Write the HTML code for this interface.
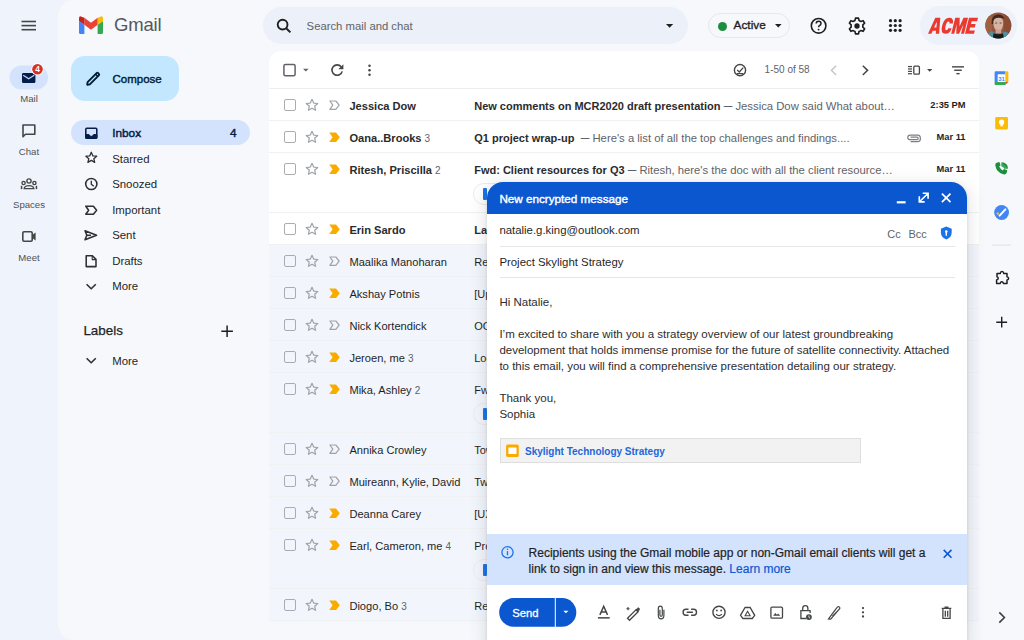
<!DOCTYPE html>
<html><head><meta charset="utf-8">
<style>
*{margin:0;padding:0;box-sizing:border-box}
html,body{width:1024px;height:640px;overflow:hidden}
body{background:#eef3fc;font-family:"Liberation Sans",sans-serif;position:relative;color:#1f1f1f}
.a{position:absolute}
.t{position:absolute;line-height:0;white-space:nowrap}
svg{position:absolute;overflow:visible}
#panel{left:58px;top:0;width:966px;height:640px;background:#f6f8fc;border-radius:16px 0 0 16px}
.rl{font-size:9.6px;color:#4f5257;text-align:center;width:58px;left:0}
.nav{font-size:11.4px;color:#1f1f1f;left:112.2px}
.row{position:absolute;left:0;width:100%;height:32px;border-bottom:1px solid #eff1f3}
.row.rd{background:#f2f6fc}
.row.ur{background:#fff}
.nm{left:80.4px;font-size:11.1px;color:#1f1f1f}
.ur .nm,.ur .sb{font-weight:bold;color:#2a2b2d}
.sb{left:205.2px;font-size:11px;color:#1f1f1f;max-width:440px;overflow:hidden;line-height:14px;margin-top:-7px}
.sn{color:#5f6368;font-weight:normal;font-size:11.3px}
.cnt{font-size:10px;color:#5f6368;font-weight:normal}
.dt{right:13.2px;font-size:9.3px;font-weight:bold;color:#1f1f1f;text-align:right}
.cb{position:absolute;left:14.6px;width:12px;height:12px;border:1.4px solid #a9acb0;border-radius:2px}
.chip{position:absolute;left:204px;width:120px;height:22px;border:1px solid #ebebeb;border-radius:11px;background:transparent}
</style></head><body>

<!-- LEFT RAIL -->
<svg width="58" height="640" style="left:0;top:0">
  <g fill="#444746">
    <rect x="21.5" y="20.7" width="14.5" height="1.6"/>
    <rect x="21.5" y="24.8" width="14.5" height="1.6"/>
    <rect x="21.5" y="28.9" width="14.5" height="1.6"/>
  </g>
  <rect x="9.5" y="65.5" width="38.5" height="24" rx="12" fill="#d3e3fd"/>
  <path d="M22 74.2 Q22 73 23.2 73 H34.2 Q35.4 73 35.4 74.2 V81.8 Q35.4 83 34.2 83 H23.2 Q22 83 22 81.8Z" fill="#041e49"/>
  <path d="M23.2 75.2 L28.7 78.8 L34.2 75.2" stroke="#c7d6f5" stroke-width="1.2" fill="none"/>
  <circle cx="37.5" cy="69.3" r="6.2" fill="#fff"/>
  <circle cx="37.5" cy="69.3" r="5.3" fill="#d93025"/>
  <text x="37.5" y="72.4" font-size="8.4" font-weight="bold" fill="#fff" text-anchor="middle" font-family="Liberation Sans">4</text>
  <!-- chat -->
  <path d="M23 125 H34.8 V134.3 H25.5 L23 136.8Z" stroke="#444746" stroke-width="1.6" fill="none" stroke-linejoin="round"/>
  <!-- spaces -->
  <g stroke="#444746" stroke-width="1.4" fill="none">
    <circle cx="29" cy="181" r="2.1"/>
    <circle cx="23.6" cy="183" r="1.6"/>
    <circle cx="34.4" cy="183" r="1.6"/>
    <path d="M24.2 188.6 Q24.6 185.6 29 185.6 Q33.4 185.6 33.8 188.6Z"/>
  </g>
  <rect x="20.8" y="185.8" width="1.5" height="3.3" fill="#444746"/>
  <rect x="35.7" y="185.8" width="1.5" height="3.3" fill="#444746"/>
  <!-- meet -->
  <rect x="22.8" y="231.8" width="9.4" height="9.4" rx="1.2" stroke="#444746" stroke-width="1.6" fill="none"/>
  <path d="M32.2 235 L35.6 232.6 V240.4 L32.2 238Z" fill="#444746"/>
</svg>
<div class="t rl" style="top:98.8px">Mail</div>
<div class="t rl" style="top:151.7px">Chat</div>
<div class="t rl" style="top:204.6px">Spaces</div>
<div class="t rl" style="top:257.5px">Meet</div>

<div id="panel" class="a"></div>

<!-- LOGO -->
<svg width="24" height="18" style="left:79.3px;top:16.2px" viewBox="0 0 24 18">
  <path d="M1.6 18 H5.4 V8.8 L0 4.9 V16.4 Q0 18 1.6 18Z" fill="#4285f4"/>
  <path d="M18.6 18 H22.4 Q24 18 24 16.4 V4.9 L18.6 8.8Z" fill="#34a853"/>
  <path d="M18.6 1.8 V8.8 L24 4.9 V2.6 Q24 -0.8 21 0.9Z" fill="#fbbc04"/>
  <path d="M5.4 8.8 V1.8 L12 6.7 L18.6 1.8 V8.8 L12 13.7Z" fill="#ea4335"/>
  <path d="M0 2.6 V4.9 L5.4 8.8 V1.8 L3 0.9 Q0 -0.8 0 2.6Z" fill="#c5221f"/>
</svg>
<div class="t" style="left:114px;top:24.8px;font-size:18.5px;color:#54575b;letter-spacing:-0.2px">Gmail</div>

<!-- COMPOSE BTN -->
<div class="a" style="left:70.7px;top:56px;width:108px;height:45px;border-radius:14px;background:#c2e7ff"></div>
<svg width="16" height="16" style="left:85px;top:70.5px">
  <path d="M2.2 13.6 L2.6 11.2 L11.6 2.2 Q12.4 1.4 13.2 2.2 L13.8 2.8 Q14.6 3.6 13.8 4.4 L4.8 13.4 L2.4 13.8Z" stroke="#001d35" stroke-width="1.9" fill="none" stroke-linejoin="round"/>
  <path d="M10.6 3.2 L12.8 5.4" stroke="#001d35" stroke-width="1.5"/>
</svg>
<div class="t" style="left:112.5px;top:78.6px;font-size:11.5px;color:#001d35;-webkit-text-stroke:0.4px #001d35">Compose</div>

<!-- NAV -->
<div class="a" style="left:70.6px;top:120.2px;width:179px;height:25px;border-radius:12.5px;background:#d3e3fd"></div>
<svg width="200" height="380" style="left:0;top:0">
  <g stroke="#2f3033" stroke-width="1.55" fill="none" stroke-linejoin="round">
    <!-- inbox -->
    <rect x="85.8" y="128.3" width="11" height="10" rx="1" stroke="#041e49"/>
    <path d="M85.8 134.6 H89 Q89.6 136.4 91.3 136.4 Q93 136.4 93.6 134.6 H96.8 V138.3 H85.8Z" fill="#041e49" stroke="#041e49" stroke-width="1"/>
    <!-- star -->
    <path d="M91.3 152.3 L92.9 155.9 L96.7 156.2 L93.8 158.7 L94.7 162.4 L91.3 160.4 L87.9 162.4 L88.8 158.7 L85.9 156.2 L89.7 155.9Z" stroke-width="1.3"/>
    <!-- snooze clock -->
    <circle cx="91.3" cy="184" r="5.6"/>
    <path d="M91.3 180.8 V184.3 L93.8 186.3" stroke-width="1.3"/>
    <!-- important -->
    <path d="M85.8 206.2 H93.4 L96.6 210.2 L93.4 214.2 H85.8 L88.6 210.2Z"/>
    <!-- sent -->
    <path d="M85 230.8 L96.6 235.3 L85 239.8 L86.8 235.3Z"/>
    <path d="M86.8 235.3 H91"/>
    <!-- drafts -->
    <path d="M86.2 255.8 H92.4 L96 259.4 V266.6 H86.2Z"/>
    <path d="M92.2 255.8 V259.6 H96" stroke-width="1.1"/>
    <!-- more -->
    <path d="M86.6 284.2 L91.2 288.8 L95.8 284.2" stroke-width="1.6"/>
    <path d="M86.6 358.2 L91.2 362.8 L95.8 358.2" stroke-width="1.6"/>
    <!-- plus -->
    <path d="M227.1 325.4 V337 M221.3 331.2 H232.9" stroke="#1f1f1f" stroke-width="1.5"/>
  </g>
</svg>
<div class="t nav" style="top:133px;color:#041e49;font-size:11.8px;-webkit-text-stroke:0.45px #041e49">Inbox</div>
<div class="t" style="left:230px;top:133px;color:#041e49;font-size:11.8px;-webkit-text-stroke:0.45px #041e49">4</div>
<div class="t nav" style="top:158.5px">Starred</div>
<div class="t nav" style="top:184.1px">Snoozed</div>
<div class="t nav" style="top:209.7px">Important</div>
<div class="t nav" style="top:235.2px">Sent</div>
<div class="t nav" style="top:260.8px">Drafts</div>
<div class="t nav" style="top:286.4px">More</div>
<div class="t" style="left:83.4px;top:330.6px;font-size:13.4px;color:#1f1f1f;-webkit-text-stroke:0.25px #1f1f1f">Labels</div>
<div class="t nav" style="top:360.5px">More</div>

<!-- TOP BAR -->
<div class="a" style="left:263.2px;top:6.8px;width:424.7px;height:37.2px;border-radius:19px;background:#ecf0f8"></div>
<svg width="20" height="20" style="left:275px;top:17px">
  <circle cx="7.6" cy="7.6" r="4.9" stroke="#1f1f1f" stroke-width="1.9" fill="none"/>
  <path d="M11.2 11.2 L15.4 15.4" stroke="#1f1f1f" stroke-width="2"/>
</svg>
<div class="t" style="left:306.6px;top:25.6px;font-size:11.3px;color:#5f6368">Search mail and chat</div>
<svg width="10" height="6" style="left:666px;top:23.6px"><path d="M0 0 H7.2 L3.6 3.8Z" fill="#1f1f1f"/></svg>

<div class="a" style="left:708px;top:12.7px;width:81.5px;height:25.3px;border-radius:13px;border:1.6px solid #e5e7eb"></div>
<div class="a" style="left:718.2px;top:21.5px;width:9px;height:9px;border-radius:50%;background:#1e8e3e"></div>
<div class="t" style="left:733.6px;top:25.4px;font-size:11.8px;color:#1f1f1f;-webkit-text-stroke:0.35px #1f1f1f">Active</div>
<svg width="10" height="6" style="left:775px;top:24px"><path d="M0 0 H6.6 L3.3 3.4Z" fill="#1f1f1f"/></svg>

<svg width="120" height="40" style="left:800px;top:5px">
  <!-- help -->
  <circle cx="18.6" cy="20.8" r="7.3" stroke="#1f1f1f" stroke-width="1.6" fill="none"/>
  <path d="M16.2 18.6 Q16.2 16.2 18.6 16.2 Q21 16.2 21 18.4 Q21 19.8 19.4 20.6 Q18.6 21.1 18.6 22.3" stroke="#1f1f1f" stroke-width="1.5" fill="none"/>
  <circle cx="18.6" cy="24.6" r="0.95" fill="#1f1f1f"/>
  <!-- apps -->
  <g fill="#1f1f1f"><circle cx="90.5" cy="15.7" r="1.6"/><circle cx="95.29999999999995" cy="15.7" r="1.6"/><circle cx="100.10000000000002" cy="15.7" r="1.6"/><circle cx="90.5" cy="20.5" r="1.6"/><circle cx="95.29999999999995" cy="20.5" r="1.6"/><circle cx="100.10000000000002" cy="20.5" r="1.6"/><circle cx="90.5" cy="25.3" r="1.6"/><circle cx="95.29999999999995" cy="25.3" r="1.6"/><circle cx="100.10000000000002" cy="25.3" r="1.6"/></g>
</svg>
<!-- settings gear -->
<svg width="20" height="20" viewBox="0 0 24 24" style="left:846.6px;top:15.8px">
  <path fill="none" stroke="#1f1f1f" stroke-width="2" stroke-linejoin="round" d="M10.2 2.5 H13.8 L14.4 5.3 Q15.6 5.8 16.6 6.5 L19.3 5.6 L21.1 8.7 L19 10.6 Q19.2 12 19 13.4 L21.1 15.3 L19.3 18.4 L16.6 17.5 Q15.6 18.2 14.4 18.7 L13.8 21.5 H10.2 L9.6 18.7 Q8.4 18.2 7.4 17.5 L4.7 18.4 L2.9 15.3 L5 13.4 Q4.8 12 5 10.6 L2.9 8.7 L4.7 5.6 L7.4 6.5 Q8.4 5.8 9.6 5.3Z"/>
  <circle cx="12" cy="12" r="3.2" fill="#1f1f1f"/>
</svg>

<div class="a" style="left:920px;top:5.7px;width:97px;height:39px;border-radius:20px;background:#edf1f9"></div>
<svg width="1024" height="50" style="left:0;top:0">
  <g transform="translate(932,17.8) skewX(-14) scale(0.83,1)" fill="#ea3a30" fill-rule="evenodd">
    <path d="M0 16 L4 0 H10 L13.4 16 H9.4 L8.8 13 H4.8 L4.1 16Z M5.5 9.8 H8.2 L7.3 4.6 H6.6Z"/>
    <path d="M14.6 8 Q14.6 0 21 0 Q26.4 0 26.8 5.6 H22.8 Q22.6 3.6 21.1 3.6 Q18.8 3.6 18.8 8 Q18.8 12.4 21.1 12.4 Q22.6 12.4 22.8 10.4 H26.8 Q26.4 16 21 16 Q14.6 16 14.6 8Z"/>
    <path d="M28 16 V0 H33.4 L35.7 8.6 L38 0 H43.4 V16 H39.8 V6.4 L37.4 16 H34 L31.6 6.4 V16Z"/>
    <path d="M44.6 0 H55.4 V3.4 H48.8 V6.3 H54.4 V9.6 H48.8 V12.6 H55.4 V16 H44.6Z"/>
  </g>
  <defs><clipPath id="av"><circle cx="998.3" cy="25.5" r="13"/></clipPath></defs>
  <g clip-path="url(#av)">
    <rect x="985" y="12" width="27" height="27" fill="#94563c"/>
    <rect x="985" y="12" width="7" height="27" fill="#a0603f"/>
    <rect x="1004" y="12" width="8" height="27" fill="#8a4c35"/>
    <path d="M991.6 24 Q991 15.6 997.6 14.6 Q1003.4 14.4 1004.6 19.6 Q1004 17.4 999.4 17.8 Q994.4 18.4 993.4 24Z" fill="#3e271d"/>
    <path d="M993.4 21.6 Q993.8 17.8 998.4 17.8 Q1003 17.8 1003.2 22 Q1003.4 27.8 1000.6 30.4 Q998.6 31.6 996.4 30.6 Q993.2 28.4 993.4 21.6Z" fill="#d7b3a3"/>
    <rect x="995.2" y="22.6" width="2" height="0.9" fill="#5a3e36"/>
    <rect x="999.6" y="22.6" width="2" height="0.9" fill="#5a3e36"/>
    <rect x="995.6" y="29.4" width="5.6" height="4.4" fill="#caa294"/>
    <path d="M986 39 Q987 32.6 992 31.2 L995 33 H1002 L1005 31.4 Q1010 32.6 1011 39Z" fill="#4f8fa0"/>
    <path d="M992.6 39 L993.6 33.2 Q998.4 35.2 1003 33.2 L1004 39Z" fill="#1a1a1a"/>
  </g>
</svg>
<div class="a" style="left:269px;top:51.25px;width:709.7px;height:574px;background:linear-gradient(#fff 0,#fff 560px,#f4f7fc 560px);border-radius:12px 12px 2px 2px;overflow:hidden">
<div class="a" style="left:0;top:37.2px;width:100%;height:1px;background:#eceef1"></div>
<div class="row ur" style="top:37.75px;height:32px">
<div class="cb" style="top:10.0px"></div>
<svg width="14" height="14" style="left:36px;top:8.5px"><path d="M7 1.3 L8.7 5.1 L12.8 5.5 L9.7 8.2 L10.6 12.3 L7 10.2 L3.4 12.3 L4.3 8.2 L1.2 5.5 L5.3 5.1Z" fill="none" stroke="#a0a3a7" stroke-width="1.2" stroke-linejoin="round"/></svg>
<svg width="12" height="11" style="left:59.5px;top:10.7px"><path d="M0.9 1 H6.8 L10.2 5.2 L6.8 9.4 H0.9 L3.8 5.2Z" fill="none" stroke="#a0a3a7" stroke-width="1.2" stroke-linejoin="round"/></svg>
<div class="t nm" style="top:16.6px">Jessica Dow</div>
<div class="t sb" style="top:16.6px">New comments on MCR2020 draft presentation<span class="sn"> <span style='font-size:8.6px;vertical-align:1.2px;font-weight:bold'>—</span> Jessica Dow said What about…</span></div>
<div class="t dt" style="top:16.4px">2:35 PM</div>
</div>
<div class="row ur" style="top:69.75px;height:32px">
<div class="cb" style="top:10.0px"></div>
<svg width="14" height="14" style="left:36px;top:8.5px"><path d="M7 1.3 L8.7 5.1 L12.8 5.5 L9.7 8.2 L10.6 12.3 L7 10.2 L3.4 12.3 L4.3 8.2 L1.2 5.5 L5.3 5.1Z" fill="none" stroke="#a0a3a7" stroke-width="1.2" stroke-linejoin="round"/></svg>
<svg width="12" height="11" style="left:59.5px;top:10.7px"><path d="M0.2 0.4 H7 L10.8 5.2 L7 10 H0.2 L3.6 5.2Z" fill="#f9ab00"/></svg>
<div class="t nm" style="top:16.6px">Oana..Brooks <span class="cnt">3</span></div>
<div class="t sb" style="top:16.6px">Q1 project wrap-up<span class="sn">&nbsp; <span style='font-size:8.6px;vertical-align:1.2px;font-weight:bold'>—</span> Here's a list of all the top challenges and findings....</span></div>
<svg width="16" height="10" style="left:636.5px;top:11.5px"><path d="M4.6 8.6 H11.8 Q14.4 8.6 14.4 5.4 Q14.4 2.2 11.8 2.2 H4 Q1.8 2.2 1.8 4.4 Q1.8 6.6 4 6.6 H11 Q12.2 6.6 12.2 5.4 Q12.2 4.2 11 4.2 H4.6" fill="none" stroke="#7c7f84" stroke-width="1.2"/></svg>
<div class="t dt" style="top:16.4px">Mar 11</div>
</div>
<div class="row ur" style="top:101.75px;height:60px">
<div class="cb" style="top:10.0px"></div>
<svg width="14" height="14" style="left:36px;top:8.5px"><path d="M7 1.3 L8.7 5.1 L12.8 5.5 L9.7 8.2 L10.6 12.3 L7 10.2 L3.4 12.3 L4.3 8.2 L1.2 5.5 L5.3 5.1Z" fill="none" stroke="#a0a3a7" stroke-width="1.2" stroke-linejoin="round"/></svg>
<svg width="12" height="11" style="left:59.5px;top:10.7px"><path d="M0.2 0.4 H7 L10.8 5.2 L7 10 H0.2 L3.6 5.2Z" fill="#f9ab00"/></svg>
<div class="t nm" style="top:16.6px">Ritesh, Priscilla <span class="cnt">2</span></div>
<div class="t sb" style="top:16.6px">Fwd: Client resources for Q3<span class="sn"> <span style='font-size:8.6px;vertical-align:1.2px;font-weight:bold'>—</span> Ritesh, here's the doc with all the client resource…</span></div>
<div class="t dt" style="top:16.4px">Mar 11</div>
<div class="chip" style="top:30px"><div class="a" style="left:9.3px;top:4px;width:3.4px;height:12.2px;background:#1a73e8;border-radius:1px"></div></div>
</div>
<div class="row ur" style="top:161.75px;height:32px">
<div class="cb" style="top:10.0px"></div>
<svg width="14" height="14" style="left:36px;top:8.5px"><path d="M7 1.3 L8.7 5.1 L12.8 5.5 L9.7 8.2 L10.6 12.3 L7 10.2 L3.4 12.3 L4.3 8.2 L1.2 5.5 L5.3 5.1Z" fill="none" stroke="#a0a3a7" stroke-width="1.2" stroke-linejoin="round"/></svg>
<svg width="12" height="11" style="left:59.5px;top:10.7px"><path d="M0.2 0.4 H7 L10.8 5.2 L7 10 H0.2 L3.6 5.2Z" fill="#f9ab00"/></svg>
<div class="t nm" style="top:16.6px">Erin Sardo</div>
<div class="t sb" style="top:16.6px">Last year's EMEA strategy deck<span class="sn"> <span style='font-size:8.6px;vertical-align:1.2px;font-weight:bold'>—</span> Sending this out to anyone who missed it</span></div>
<div class="t dt" style="top:16.4px">Mar 11</div>
</div>
<div class="row rd" style="top:193.75px;height:32px">
<div class="cb" style="top:10.0px"></div>
<svg width="14" height="14" style="left:36px;top:8.5px"><path d="M7 1.3 L8.7 5.1 L12.8 5.5 L9.7 8.2 L10.6 12.3 L7 10.2 L3.4 12.3 L4.3 8.2 L1.2 5.5 L5.3 5.1Z" fill="none" stroke="#a0a3a7" stroke-width="1.2" stroke-linejoin="round"/></svg>
<svg width="12" height="11" style="left:59.5px;top:10.7px"><path d="M0.9 1 H6.8 L10.2 5.2 L6.8 9.4 H0.9 L3.8 5.2Z" fill="none" stroke="#a0a3a7" stroke-width="1.2" stroke-linejoin="round"/></svg>
<div class="t nm" style="top:16.6px">Maalika Manoharan</div>
<div class="t sb" style="top:16.6px">Re: Project Skylight 1-pager<span class="sn"> <span style='font-size:8.6px;vertical-align:1.2px;font-weight:bold'>—</span> Overall, it looks great! I have a few suggestions</span></div>
<div class="t dt" style="top:16.4px">Mar 10</div>
</div>
<div class="row rd" style="top:225.75px;height:32px">
<div class="cb" style="top:10.0px"></div>
<svg width="14" height="14" style="left:36px;top:8.5px"><path d="M7 1.3 L8.7 5.1 L12.8 5.5 L9.7 8.2 L10.6 12.3 L7 10.2 L3.4 12.3 L4.3 8.2 L1.2 5.5 L5.3 5.1Z" fill="none" stroke="#a0a3a7" stroke-width="1.2" stroke-linejoin="round"/></svg>
<svg width="12" height="11" style="left:59.5px;top:10.7px"><path d="M0.2 0.4 H7 L10.8 5.2 L7 10 H0.2 L3.6 5.2Z" fill="#f9ab00"/></svg>
<div class="t nm" style="top:16.6px">Akshay Potnis</div>
<div class="t sb" style="top:16.6px">[Updated invitation] Midwest retail sales check-in<span class="sn"> <span style='font-size:8.6px;vertical-align:1.2px;font-weight:bold'>—</span> Midwest retail sales check-in</span></div>
<div class="t dt" style="top:16.4px">Mar 10</div>
</div>
<div class="row rd" style="top:257.75px;height:32px">
<div class="cb" style="top:10.0px"></div>
<svg width="14" height="14" style="left:36px;top:8.5px"><path d="M7 1.3 L8.7 5.1 L12.8 5.5 L9.7 8.2 L10.6 12.3 L7 10.2 L3.4 12.3 L4.3 8.2 L1.2 5.5 L5.3 5.1Z" fill="none" stroke="#a0a3a7" stroke-width="1.2" stroke-linejoin="round"/></svg>
<svg width="12" height="11" style="left:59.5px;top:10.7px"><path d="M0.9 1 H6.8 L10.2 5.2 L6.8 9.4 H0.9 L3.8 5.2Z" fill="none" stroke="#a0a3a7" stroke-width="1.2" stroke-linejoin="round"/></svg>
<div class="t nm" style="top:16.6px">Nick Kortendick</div>
<div class="t sb" style="top:16.6px">OOO next week<span class="sn"> <span style='font-size:8.6px;vertical-align:1.2px;font-weight:bold'>—</span> Hey, just wanted to give you a heads-up</span></div>
<div class="t dt" style="top:16.4px">Mar 10</div>
</div>
<div class="row rd" style="top:289.75px;height:32px">
<div class="cb" style="top:10.0px"></div>
<svg width="14" height="14" style="left:36px;top:8.5px"><path d="M7 1.3 L8.7 5.1 L12.8 5.5 L9.7 8.2 L10.6 12.3 L7 10.2 L3.4 12.3 L4.3 8.2 L1.2 5.5 L5.3 5.1Z" fill="none" stroke="#a0a3a7" stroke-width="1.2" stroke-linejoin="round"/></svg>
<svg width="12" height="11" style="left:59.5px;top:10.7px"><path d="M0.2 0.4 H7 L10.8 5.2 L7 10 H0.2 L3.6 5.2Z" fill="#f9ab00"/></svg>
<div class="t nm" style="top:16.6px">Jeroen, me <span class="cnt">3</span></div>
<div class="t sb" style="top:16.6px">Logo redesign ideas<span class="sn"> <span style='font-size:8.6px;vertical-align:1.2px;font-weight:bold'>—</span> Excellent. Do have you have time to meet</span></div>
<div class="t dt" style="top:16.4px">Mar 9</div>
</div>
<div class="row rd" style="top:321.75px;height:60px">
<div class="cb" style="top:10.0px"></div>
<svg width="14" height="14" style="left:36px;top:8.5px"><path d="M7 1.3 L8.7 5.1 L12.8 5.5 L9.7 8.2 L10.6 12.3 L7 10.2 L3.4 12.3 L4.3 8.2 L1.2 5.5 L5.3 5.1Z" fill="none" stroke="#a0a3a7" stroke-width="1.2" stroke-linejoin="round"/></svg>
<svg width="12" height="11" style="left:59.5px;top:10.7px"><path d="M0.2 0.4 H7 L10.8 5.2 L7 10 H0.2 L3.6 5.2Z" fill="#f9ab00"/></svg>
<div class="t nm" style="top:16.6px">Mika, Ashley <span class="cnt">2</span></div>
<div class="t sb" style="top:16.6px">Fwd: Feedback on client's website<span class="sn"> <span style='font-size:8.6px;vertical-align:1.2px;font-weight:bold'>—</span> Here are a few ideas</span></div>
<div class="t dt" style="top:16.4px">Mar 9</div>
<div class="chip" style="top:30px"><div class="a" style="left:9.3px;top:4px;width:3.4px;height:12.2px;background:#1a73e8;border-radius:1px"></div></div>
</div>
<div class="row rd" style="top:381.75px;height:32px">
<div class="cb" style="top:10.0px"></div>
<svg width="14" height="14" style="left:36px;top:8.5px"><path d="M7 1.3 L8.7 5.1 L12.8 5.5 L9.7 8.2 L10.6 12.3 L7 10.2 L3.4 12.3 L4.3 8.2 L1.2 5.5 L5.3 5.1Z" fill="none" stroke="#a0a3a7" stroke-width="1.2" stroke-linejoin="round"/></svg>
<svg width="12" height="11" style="left:59.5px;top:10.7px"><path d="M0.9 1 H6.8 L10.2 5.2 L6.8 9.4 H0.9 L3.8 5.2Z" fill="none" stroke="#a0a3a7" stroke-width="1.2" stroke-linejoin="round"/></svg>
<div class="t nm" style="top:16.6px">Annika Crowley</div>
<div class="t sb" style="top:16.6px">Town hall on the upcoming merger<span class="sn"> <span style='font-size:8.6px;vertical-align:1.2px;font-weight:bold'>—</span> Everyone, we'll be hosting our second town hall</span></div>
<div class="t dt" style="top:16.4px">Mar 9</div>
</div>
<div class="row rd" style="top:413.75px;height:32px">
<div class="cb" style="top:10.0px"></div>
<svg width="14" height="14" style="left:36px;top:8.5px"><path d="M7 1.3 L8.7 5.1 L12.8 5.5 L9.7 8.2 L10.6 12.3 L7 10.2 L3.4 12.3 L4.3 8.2 L1.2 5.5 L5.3 5.1Z" fill="none" stroke="#a0a3a7" stroke-width="1.2" stroke-linejoin="round"/></svg>
<svg width="12" height="11" style="left:59.5px;top:10.7px"><path d="M0.9 1 H6.8 L10.2 5.2 L6.8 9.4 H0.9 L3.8 5.2Z" fill="none" stroke="#a0a3a7" stroke-width="1.2" stroke-linejoin="round"/></svg>
<div class="t nm" style="top:16.6px">Muireann, Kylie, David</div>
<div class="t sb" style="top:16.6px">Two pics from the conference<span class="sn"> <span style='font-size:8.6px;vertical-align:1.2px;font-weight:bold'>—</span> Look at the size of this crowd!</span></div>
<div class="t dt" style="top:16.4px">Mar 8</div>
</div>
<div class="row rd" style="top:445.75px;height:32px">
<div class="cb" style="top:10.0px"></div>
<svg width="14" height="14" style="left:36px;top:8.5px"><path d="M7 1.3 L8.7 5.1 L12.8 5.5 L9.7 8.2 L10.6 12.3 L7 10.2 L3.4 12.3 L4.3 8.2 L1.2 5.5 L5.3 5.1Z" fill="none" stroke="#a0a3a7" stroke-width="1.2" stroke-linejoin="round"/></svg>
<svg width="12" height="11" style="left:59.5px;top:10.7px"><path d="M0.2 0.4 H7 L10.8 5.2 L7 10 H0.2 L3.6 5.2Z" fill="#f9ab00"/></svg>
<div class="t nm" style="top:16.6px">Deanna Carey</div>
<div class="t sb" style="top:16.6px">[UX] Special delivery! This week's top picks<span class="sn"> <span style='font-size:8.6px;vertical-align:1.2px;font-weight:bold'>—</span> This week's edition</span></div>
<div class="t dt" style="top:16.4px">Mar 8</div>
</div>
<div class="row rd" style="top:477.75px;height:60px">
<div class="cb" style="top:10.0px"></div>
<svg width="14" height="14" style="left:36px;top:8.5px"><path d="M7 1.3 L8.7 5.1 L12.8 5.5 L9.7 8.2 L10.6 12.3 L7 10.2 L3.4 12.3 L4.3 8.2 L1.2 5.5 L5.3 5.1Z" fill="none" stroke="#a0a3a7" stroke-width="1.2" stroke-linejoin="round"/></svg>
<svg width="12" height="11" style="left:59.5px;top:10.7px"><path d="M0.2 0.4 H7 L10.8 5.2 L7 10 H0.2 L3.6 5.2Z" fill="#f9ab00"/></svg>
<div class="t nm" style="top:16.6px">Earl, Cameron, me <span class="cnt">4</span></div>
<div class="t sb" style="top:16.6px">Product Strategy classes<span class="sn"> <span style='font-size:8.6px;vertical-align:1.2px;font-weight:bold'>—</span> He's right here</span></div>
<div class="t dt" style="top:16.4px">Mar 8</div>
<div class="chip" style="top:30px"><div class="a" style="left:9.3px;top:4px;width:3.4px;height:12.2px;background:#1a73e8;border-radius:1px"></div></div>
</div>
<div class="row rd" style="top:537.75px;height:32px">
<div class="cb" style="top:10.0px"></div>
<svg width="14" height="14" style="left:36px;top:8.5px"><path d="M7 1.3 L8.7 5.1 L12.8 5.5 L9.7 8.2 L10.6 12.3 L7 10.2 L3.4 12.3 L4.3 8.2 L1.2 5.5 L5.3 5.1Z" fill="none" stroke="#a0a3a7" stroke-width="1.2" stroke-linejoin="round"/></svg>
<svg width="12" height="11" style="left:59.5px;top:10.7px"><path d="M0.2 0.4 H7 L10.8 5.2 L7 10 H0.2 L3.6 5.2Z" fill="#f9ab00"/></svg>
<div class="t nm" style="top:16.6px">Diogo, Bo <span class="cnt">3</span></div>
<div class="t sb" style="top:16.6px">Re: Design preview<span class="sn"> <span style='font-size:8.6px;vertical-align:1.2px;font-weight:bold'>—</span> Looks good</span></div>
<div class="t dt" style="top:16.4px">Mar 7</div>
</div>
</div>
<!-- LIST TOOLBAR -->
<svg width="720" height="40" style="left:269px;top:51.25px">
  <g transform="translate(-269,-51.25)">
    <rect x="283.9" y="64.8" width="11.2" height="11.2" rx="1.5" fill="none" stroke="#5f6368" stroke-width="1.5"/>
    <path d="M303 69 H308.6 L305.8 71.8Z" fill="#5f6368"/>
    <!-- refresh -->
    <path d="M342.2 71.6 A5.2 5.2 0 1 1 341.2 67" fill="none" stroke="#444746" stroke-width="1.6"/>
    <path d="M343.4 64.4 V69.4 H338.4Z" fill="#444746"/>
    <g fill="#444746"><circle cx="369.5" cy="66" r="1.25"/><circle cx="369.5" cy="70.5" r="1.25"/><circle cx="369.5" cy="75" r="1.25"/></g>
    <!-- check circle -->
    <circle cx="740" cy="70.4" r="5.6" fill="none" stroke="#444746" stroke-width="1.4"/>
    <path d="M737.2 70.2 L739.4 72.2 L743.2 67.8" fill="none" stroke="#444746" stroke-width="1.3"/>
    <path d="M737 73.8 H743" stroke="#444746" stroke-width="1.1"/>
    <!-- chevrons -->
    <path d="M836.2 66 L831.4 70.6 L836.2 75.2" fill="none" stroke="#c4c7cc" stroke-width="1.5"/>
    <path d="M862.8 66 L867.6 70.6 L862.8 75.2" fill="none" stroke="#444746" stroke-width="1.5"/>
    <!-- split pane -->
    <g fill="#444746">
      <rect x="908" y="66.2" width="4" height="1.2"/><rect x="908" y="68.6" width="4" height="1.2"/>
      <rect x="908" y="71" width="4" height="1.2"/><rect x="908" y="73.4" width="4" height="1.2"/>
    </g>
    <rect x="913.8" y="66.4" width="5.6" height="8" rx="1" fill="none" stroke="#444746" stroke-width="1.3"/>
    <path d="M927 69.2 H932.4 L929.7 71.9Z" fill="#444746"/>
    <!-- filter -->
    <g fill="#444746">
      <rect x="952" y="66.4" width="12" height="1.4"/>
      <rect x="954.2" y="69.8" width="7.6" height="1.4"/>
      <rect x="956.4" y="73.2" width="3.2" height="1.4"/>
    </g>
  </g>
</svg>
<div class="t" style="left:764.6px;top:70.4px;font-size:10px;color:#5f6368">1-50 of 58</div>

<!-- COMPOSE -->
<div class="a" style="left:486.5px;top:182.3px;width:480.2px;height:470px;background:#fff;border-radius:16px 16px 0 0;box-shadow:0 4px 16px 3px rgba(60,64,67,0.13),0 1px 3px rgba(60,64,67,0.18);overflow:hidden">
  <div class="a" style="left:0;top:0;width:100%;height:31.7px;background:#0b57d0"></div>
  <div class="a" style="left:13px;top:63.7px;width:455.5px;height:1px;background:#e6e6e6"></div>
  <div class="a" style="left:13px;top:95.2px;width:455.5px;height:1px;background:#e6e6e6"></div>
  <div class="a" style="left:13px;top:256px;width:361.5px;height:25px;background:#f2f2f2;border:1px solid #dedede"></div>
  <div class="a" style="left:0;top:352px;width:100%;height:50.5px;background:#d3e3fd"></div>
</div>
<div class="t" style="left:499.4px;top:198.6px;font-size:11.7px;color:#fff;-webkit-text-stroke:0.4px #fff">New encrypted message</div>
<svg width="480" height="458" style="left:486.5px;top:182.3px">
  <g transform="translate(-486.5,-182.3)">
    <rect x="896.3" y="201.5" width="8.8" height="2.2" fill="#fff"/>
    <path d="M919 202 L927.4 193.8 M922.2 193.6 H927.6 V199 M918.8 196.6 V202.2 H924.2" fill="none" stroke="#fff" stroke-width="1.6"/>
    <path d="M941.4 193.9 L950 202.5 M950 193.9 L941.4 202.5" stroke="#fff" stroke-width="1.7"/>
    <!-- shield -->
    <path d="M945.8 226.9 L951.2 229.1 V232.6 Q951.2 237.8 945.8 239.8 Q940.4 237.8 940.4 232.6 V229.1Z" fill="#1a73e8"/>
    <circle cx="945.8" cy="231.9" r="1.3" fill="#fff"/>
    <rect x="945.1" y="232.4" width="1.4" height="3.6" fill="#fff"/>
    <!-- slides icon -->
    <rect x="505.6" y="444.7" width="12.7" height="12.7" rx="1.6" fill="#f9ab00"/>
    <rect x="507.9" y="447.9" width="8.1" height="6.3" fill="#fff" rx="0.5"/>
    <!-- info icon -->
    <circle cx="507" cy="552.6" r="5.6" fill="none" stroke="#1a73e8" stroke-width="1.3"/>
    <rect x="506.35" y="551.4" width="1.3" height="4.2" fill="#1a73e8"/>
    <circle cx="507" cy="549.6" r="0.8" fill="#1a73e8"/>
    <path d="M943.2 550.2 L951 558 M951 550.2 L943.2 558" stroke="#0b57d0" stroke-width="1.6"/>
    <!-- send button -->
    <path d="M513 598.4 H554.3 V627 H513 A14.3 14.3 0 0 1 513 598.4Z" fill="#0b57d0"/>
    <path d="M555.3 598.4 H561.5 A14.3 14.3 0 0 1 561.5 627 H555.3Z" fill="#0b57d0"/>
    <path d="M562.8 611 H568 L565.4 613.6Z" fill="#fff"/>
    <!-- toolbar icons -->
    <g fill="none" stroke="#444746" stroke-width="1.4">
      <!-- format A -->
      <path d="M599.4 615.2 L603.2 606.6 L607 615.2 M600.8 612.2 H605.6" stroke-width="1.5"/>
      <rect x="597.4" y="617.4" width="11.8" height="1.5" fill="#444746" stroke="none"/>
      <!-- magic pen -->
      <path d="M627 618.6 L635.4 610.2 L637.4 612.2 L629 620.6Z" stroke-width="1.3"/><path d="M635.4 610.2 L637 608.6 Q637.8 607.8 638.6 608.6 Q639.4 609.4 638.6 610.2 L637.4 612.2Z" fill="#444746" stroke-width="1"/>
      <path d="M627.5 607.4 V610.6 M625.9 609 H629.1" stroke-width="1.1"/>
      <!-- attach -->
      <path d="M663.4 610 V615.6 Q663.4 619.2 660.6 619.2 Q657.8 619.2 657.8 615.6 V608.8 Q657.8 606.4 659.8 606.4 Q661.8 606.4 661.8 608.8 V615.4 Q661.8 616.6 660.6 616.6 Q659.4 616.6 659.4 615.4 V610" stroke-width="1.2"/>
      <!-- link -->
      <path d="M688 609.6 H685.4 Q682.6 609.6 682.6 612.6 Q682.6 615.6 685.4 615.6 H688 M690.6 609.6 H693.2 Q696 609.6 696 612.6 Q696 615.6 693.2 615.6 H690.6 M686.2 612.6 H692.4" stroke-width="1.4"/>
      <!-- emoji -->
      <circle cx="718.5" cy="612.6" r="6.1"/>
      <path d="M715.6 614.4 Q718.5 617.6 721.4 614.4" stroke-width="1.2"/><circle cx="716.4" cy="610.8" r="0.9" fill="#444746" stroke="none"/><circle cx="720.6" cy="610.8" r="0.9" fill="#444746" stroke="none"/>
      <!-- drive -->
      <path d="M744.6 607.8 H749.6 L754.2 615.6 L751.8 618.8 H742.4 L740 615.6Z" stroke-width="1.3"/>
      <path d="M747.1 611.6 L744.6 616 H749.6Z" stroke-width="1.1"/>
      <!-- photo -->
      <rect x="770.4" y="607.4" width="11.6" height="11" rx="1.2" stroke-width="1.3"/>
      <path d="M772.6 616 L774.8 613.4 L776.4 615 L777.6 613.8 L779.8 616Z" fill="#444746" stroke="none"/>
      <!-- lock clock -->
      <path d="M802.2 611 V608.8 Q802.2 606 804.8 606 Q807.4 606 807.4 608.8 V611" stroke-width="1.3"/>
      <path d="M806 618.8 H800.4 V611 H809.6 V613.4" stroke-width="1.3"/>
      <circle cx="808.4" cy="617.4" r="2.9" fill="#444746" stroke="none"/><path d="M808.4 615.8 V617.6 L809.6 618.4" stroke="#fff" stroke-width="0.8"/>
      <!-- signature -->
      <path d="M828 619.2 L836.8 607.4 Q837.8 606.4 838.8 607.2 Q839.8 608 839 609.2 L830.2 619.4Z M831.8 616.6 L839.6 608.6" stroke-width="1.2"/>
      <!-- trash -->
      <path d="M942.4 609.4 V618.6 H949.6 V609.4 M941.2 608.6 H950.8 M944 607.4 H948 M944.8 611 V617 M947.2 611 V617" stroke-width="1.3"/>
    </g>
    <g fill="#444746"><circle cx="862.5" cy="608.4" r="1.15"/><circle cx="862.5" cy="612.6" r="1.15"/><circle cx="862.5" cy="616.8" r="1.15"/></g>
  </g>
</svg>
<div class="t" style="left:499.4px;top:230.4px;font-size:11.4px;color:#1f1f1f">natalie.g.king@outlook.com</div>
<div class="t" style="left:887.2px;top:233.7px;font-size:11px;color:#5f6368">Cc</div>
<div class="t" style="left:908.4px;top:233.7px;font-size:11px;color:#5f6368">Bcc</div>
<div class="t" style="left:499.4px;top:262.3px;font-size:11.4px;color:#1f1f1f">Project Skylight Strategy</div>
<div class="a" style="left:499.4px;top:294px;font-size:11.5px;line-height:16px;color:#2c2d30;white-space:nowrap">Hi Natalie,<br><br>I’m excited to share with you a strategy overview of our latest groundbreaking<br>development that holds immense promise for the future of satellite connectivity. Attached<br>to this email, you will find a comprehensive presentation detailing our strategy.<br><br>Thank you,<br>Sophia</div>
<div class="t" style="left:525px;top:451.7px;font-size:10px;font-weight:bold;color:#1f66d8">Skylight Technology Strategy</div>
<div class="a" style="left:528.6px;top:544.6px;font-size:12px;line-height:16.2px;color:#1f1f1f;white-space:nowrap;-webkit-text-stroke:0.2px #1f1f1f">Recipients using the Gmail mobile app or non-Gmail email clients will get a<br>link to sign in and view this message. <span style="color:#0b57d0;-webkit-text-stroke:0.2px #0b57d0">Learn more</span></div>
<div class="t" style="left:512.2px;top:612.7px;font-size:11.3px;color:#fff;-webkit-text-stroke:0.3px #fff">Send</div>

<!-- RIGHT SIDEBAR -->
<svg width="44" height="640" style="left:980px;top:0">
  <g transform="translate(-980,0)">
    <!-- calendar -->
    <rect x="994.6" y="71.3" width="13.8" height="13.8" rx="1.2" fill="#fff"/>
    <path d="M994.6 72.5 Q994.6 71.3 995.8 71.3 H1005.2 V74.5 H997.8 V82 H994.6Z" fill="#4285f4"/>
    <path d="M1005.2 71.3 H1007.2 Q1008.4 71.3 1008.4 72.5 V82 H1005.2Z" fill="#fbbc04"/>
    <path d="M994.6 82 H1005.2 V85.1 H995.8 Q994.6 85.1 994.6 83.9Z" fill="#34a853"/>
    <path d="M1005.2 82 H1008.4 L1005.2 85.1Z" fill="#ea4335"/>
    <path d="M997.8 74.5 H1005.2 V82 H997.8Z" fill="#fff"/>
    <text x="1001.5" y="80.9" font-size="6" font-family="Liberation Sans" font-weight="bold" fill="#4285f4" text-anchor="middle">31</text>
    <!-- keep -->
    <rect x="995.2" y="116.9" width="12.8" height="12.5" rx="1.4" fill="#fbbc04"/>
    <circle cx="1001.6" cy="122.2" r="2.6" fill="#fff"/>
    <rect x="1000.4" y="124.4" width="2.4" height="1.9" fill="#fff"/>
    <!-- voice -->
    <path d="M997.4 162.4 L999.4 162 L1000.6 165.2 L999.2 166.6 Q1000.2 169 1002.6 170.4 L1004 169 L1007.2 170.2 L1006.8 172.6 Q1006.4 174.6 1004 174.4 Q996.6 173.2 995.2 165 Q995.2 162.8 997.4 162.4Z" fill="#1e8e3e"/>
    <path d="M1001.6 162.2 Q1007.6 162.4 1008 168.4 H1004.2 Q1004 166.4 1001.6 166.2Z" fill="#1e8e3e"/>
    <path d="M1001.6 162.2 L1008 168.4 H1004.2 Q1004 166.4 1001.6 166.2Z" fill="#34a853"/>
    <!-- tasks -->
    <circle cx="1001.6" cy="212.5" r="7.4" fill="#4285f4"/>
    <path d="M999.6 215.6 L1005.4 209.4" stroke="#fff" stroke-width="2" stroke-linecap="round"/>
    <circle cx="997.8" cy="213.6" r="1.3" fill="#fbbc04"/>
    <rect x="992" y="244.6" width="19" height="1" fill="#dde1e6"/>
    <!-- puzzle add-on -->
    <path d="M997 273.6 H1000.2 Q1000.4 271.6 1002 271.6 Q1003.6 271.6 1003.8 273.6 H1007 V276.8 Q1008.6 277 1008.6 278.4 Q1008.6 279.8 1007 280 V283.4 H1003.4 Q1003 281.8 1001.8 281.8 Q1000.6 281.8 1000.2 283.4 H996.6 L996.6 280 Q998.2 279.4 998.2 278.4 Q998.2 277.2 997 276.8Z" fill="none" stroke="#1f1f1f" stroke-width="1.5" stroke-linejoin="round"/>
    <path d="M1001.7 316.8 V327.6 M996.3 322.2 H1007.1" stroke="#1f1f1f" stroke-width="1.4"/>
    <path d="M999.3 612.4 L1004.4 617.5 L999.3 622.6" fill="none" stroke="#3c4043" stroke-width="1.6"/>
  </g>
</svg>

</body></html>
